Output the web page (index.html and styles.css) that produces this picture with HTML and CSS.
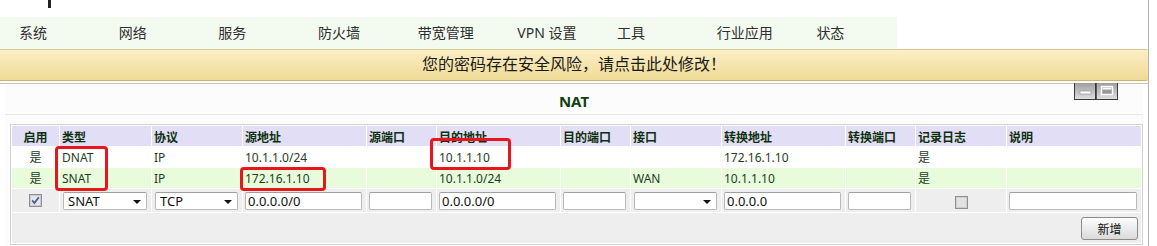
FILE: index.html
```html
<!DOCTYPE html>
<html lang="zh-CN">
<head>
<meta charset="utf-8">
<title>NAT</title>
<link rel="stylesheet" href="styles.css">
</head>
<body>
<div class="page">
  <div class="topstrip"><span class="logo-bar"></span></div>
  <nav class="nav">
    <a class="nav-item">系统</a>
    <a class="nav-item">网络</a>
    <a class="nav-item">服务</a>
    <a class="nav-item">防火墙</a>
    <a class="nav-item">带宽管理</a>
    <a class="nav-item">VPN 设置</a>
    <a class="nav-item">工具</a>
    <a class="nav-item">行业应用</a>
    <a class="nav-item">状态</a>
  </nav>
  <div class="banner">您的密码存在安全风险，请点击此处修改！</div>
  <div class="panel">
    <div class="panel-inner">
      <div class="panel-title">
        NAT
        <div class="winbtns">
          <span class="wbtn"><svg width="22" height="17" viewBox="0 0 22 17"><rect x="6" y="8" width="11" height="3" fill="#fff" stroke="#8a8a8a" stroke-width="0.6"/></svg></span>
          <span class="wbtn"><svg width="22" height="17" viewBox="0 0 22 17"><rect x="5.5" y="3.5" width="11" height="8" fill="#9a9a9a" stroke="#fff" stroke-width="1.4"/><rect x="6.5" y="4.5" width="9" height="2" fill="#fff"/></svg></span>
        </div>
      </div>
      <table class="grid">
        <colgroup>
          <col class="c1"><col class="c2"><col class="c3"><col class="c4"><col class="c5"><col class="c6">
          <col class="c7"><col class="c8"><col class="c9"><col class="c10"><col class="c11"><col class="c12">
        </colgroup>
        <thead>
          <tr class="head">
            <th class="center">启用</th><th>类型</th><th>协议</th><th>源地址</th><th>源端口</th><th>目的地址</th>
            <th>目的端口</th><th>接口</th><th>转换地址</th><th>转换端口</th><th>记录日志</th><th>说明</th>
          </tr>
        </thead>
        <tbody>
          <tr class="row">
            <td class="center">是</td><td>DNAT</td><td>IP</td><td>10.1.1.0/24</td><td></td><td>10.1.1.10</td>
            <td></td><td></td><td>172.16.1.10</td><td></td><td>是</td><td></td>
          </tr>
          <tr class="row alt">
            <td class="center">是</td><td>SNAT</td><td>IP</td><td>172.16.1.10</td><td></td><td>10.1.1.0/24</td>
            <td></td><td>WAN</td><td>10.1.1.10</td><td></td><td>是</td><td></td>
          </tr>
          <tr class="form-row">
            <td class="center top"><span class="chk"><svg width="13" height="13" viewBox="0 0 13 13"><rect x="0.5" y="0.5" width="12" height="12" fill="#fff" stroke="#8e8f8f"/><rect x="1.5" y="1.5" width="10" height="10" fill="#e6e6ea" stroke="#c9c9cf"/><path d="M3.2 6.4 L5.4 9 L9.8 3.2" fill="none" stroke="#4a5e98" stroke-width="1.8"/></svg></span></td>
            <td><span class="sel"><select class="ctl"><option>SNAT</option></select><span class="arrow"></span></span></td>
            <td><span class="sel"><select class="ctl"><option>TCP</option></select><span class="arrow"></span></span></td>
            <td><input class="ctl" type="text" value="0.0.0.0/0"></td>
            <td><input class="ctl" type="text" value=""></td>
            <td><input class="ctl" type="text" value="0.0.0.0/0"></td>
            <td><input class="ctl" type="text" value=""></td>
            <td><span class="sel"><select class="ctl"><option></option></select><span class="arrow"></span></span></td>
            <td><input class="ctl" type="text" value="0.0.0.0"></td>
            <td><input class="ctl" type="text" value=""></td>
            <td class="center"><span class="chk"><svg width="13" height="13" viewBox="0 0 13 13"><rect x="0.5" y="0.5" width="12" height="12" fill="#fff" stroke="#8e8f8f"/><rect x="1.5" y="1.5" width="10" height="10" fill="#e2e2e4" stroke="#cfcfd2"/></svg></span></td>
            <td><input class="ctl" type="text" value=""></td>
          </tr>
          <tr class="foot">
            <td colspan="12"><button class="btn" type="button">新增</button></td>
          </tr>
        </tbody>
      </table>
    </div>
  </div>
  <span class="mark mark1"></span>
  <span class="mark mark2"></span>
  <span class="mark mark3"></span>
</div>
</body>
</html>
```

FILE: styles.css
```css
* { box-sizing: border-box; }
html, body { margin: 0; padding: 0; background: #fff; }
body {
  font-family: "Noto Sans", "Noto Sans CJK SC", sans-serif;
  width: 1157px;
  height: 246px;
  overflow: hidden;
}
.page {
  position: relative;
  width: 1149px;
  height: 246px;
  overflow: hidden;
  border-right: 1px solid #b4b4b4;
}
.topstrip {
  height: 17px;
  position: relative;
}
.logo-bar {
  display: block;
  margin-left: 48px;
  width: 3px;
  height: 8px;
  background: #222;
}
.nav {
  display: flex;
  width: 897px;
  height: 32px;
  background: #f3faf0;
}
.nav-item {
  width: 100px;
  padding-left: 19px;
  font-size: 14px;
  line-height: 32px;
  color: #2e2e2e;
  white-space: nowrap;
}
.banner {
  height: 32px;
  border-top: 1px solid #d9c98f;
  border-bottom: 1px solid #c9b470;
  border-radius: 0 2px 2px 0;
  background: linear-gradient(#fcefc6, #efda95);
  text-align: center;
  font-family: "Noto Sans CJK SC", sans-serif;
  font-size: 16px;
  line-height: 26px;
  color: #1a1a1a;
}
.panel {
  margin-top: 2px;
  border-top: 1px solid #c4c4c4;
  padding-left: 5px;
  height: 163px;
}
.panel-inner {
  position: relative;
  width: 1138px;
  height: 100%;
  background: #fcfcfc;
}
.panel-title {
  height: 31px;
  border-bottom: 1px solid #e6e6e6;
  text-align: center;
  font-size: 15px;
  font-weight: bold;
  line-height: 34px;
  color: #103e10;
}
.winbtns {
  position: absolute;
  top: -1px;
  right: 25px;
  display: flex;
}
.wbtn {
  display: block;
  width: 22px;
  height: 17px;
  background: linear-gradient(#9e9e9e, #dedede);
  border: 1px solid #3a3a3a;
  border-top: none;
  line-height: 0;
}
.wbtn + .wbtn { border-left: 1px solid #5a5a5a; }
.wbtn svg { display: block; margin-left: -1px; }
.grid {
  margin: 9px 0 0 5px;
  width: 1133px;
  table-layout: fixed;
  border-collapse: separate;
  border-spacing: 1px;
  border: 1px solid #d2d2d2;
  background: #fff;
  font-size: 12px;
  color: #1f3d1f;
}
.c1 { width: 47px; }
.c2 { width: 91px; }
.c3 { width: 90px; }
.c4 { width: 123px; }
.c5 { width: 69px; }
.c6 { width: 123px; }
.c7 { width: 69px; }
.c8 { width: 90px; }
.c9 { width: 123px; }
.c10 { width: 69px; }
.c11 { width: 90px; }
.c12 { width: 134px; }
.grid th, .grid td {
  padding: 0 0 0 2px;
  text-align: left;
  white-space: nowrap;
  overflow: hidden;
}
.grid .center { text-align: center; padding-left: 0; }
.head th {
  height: 20px;
  background: #e1def5;
  font-weight: bold;
  color: #0f300f;
  vertical-align: middle;
  padding-top: 2px;
}
.row td { height: 20px; background: #fff; vertical-align: middle; }
.row.alt td { background: #e8fcdc; }
.form-row td { height: 23px; background: #eeeeee; vertical-align: middle; padding-top: 1px; }
.form-row td.top { vertical-align: top; padding-top: 2px; }
.ctl {
  display: block;
  width: calc(100% - 4px);
  height: 18px;
  margin: 0;
  padding: 0 0 0 2px;
  border: 1px solid #b9b9b9;
  border-top-color: #a0a0a0;
  border-radius: 2px;
  background: #fff;
  font-family: "Noto Sans", "Noto Sans CJK SC", sans-serif;
  font-size: 13px;
  line-height: 16px;
  color: #111;
  outline: none;
}
.sel {
  position: relative;
  display: block;
  width: calc(100% - 5px);
  margin-left: 1px;
}
.sel .ctl {
  width: 100%;
  -webkit-appearance: none;
  appearance: none;
  padding-left: 4px;
}
.arrow {
  position: absolute;
  right: 6px;
  top: 8px;
  width: 0;
  height: 0;
  border-left: 4px solid transparent;
  border-right: 4px solid transparent;
  border-top: 4px solid #111;
}
.chk { display: inline-block; line-height: 0; vertical-align: middle; }
.chk svg { display: block; }
.foot td {
  height: 30px;
  background: #eeeeee;
  text-align: right;
  padding-right: 3px;
  vertical-align: middle;
}
.btn {
  width: 57px;
  height: 23px;
  margin-top: 1px;
  border: 1px solid #8c8c8c;
  border-radius: 3px;
  background: linear-gradient(#fdfdfd, #dadada);
  font-family: "Noto Sans", "Noto Sans CJK SC", sans-serif;
  font-size: 12px;
  color: #111;
  padding: 0;
}
.mark {
  position: absolute;
  border: 3px solid #e8161b;
  border-radius: 4px;
  pointer-events: none;
}
.mark1 { left: 55px; top: 146px; width: 53px; height: 45px; }
.mark2 { left: 430px; top: 138px; width: 81px; height: 32px; }
.mark3 { left: 240px; top: 167px; width: 86px; height: 24px; }
```
